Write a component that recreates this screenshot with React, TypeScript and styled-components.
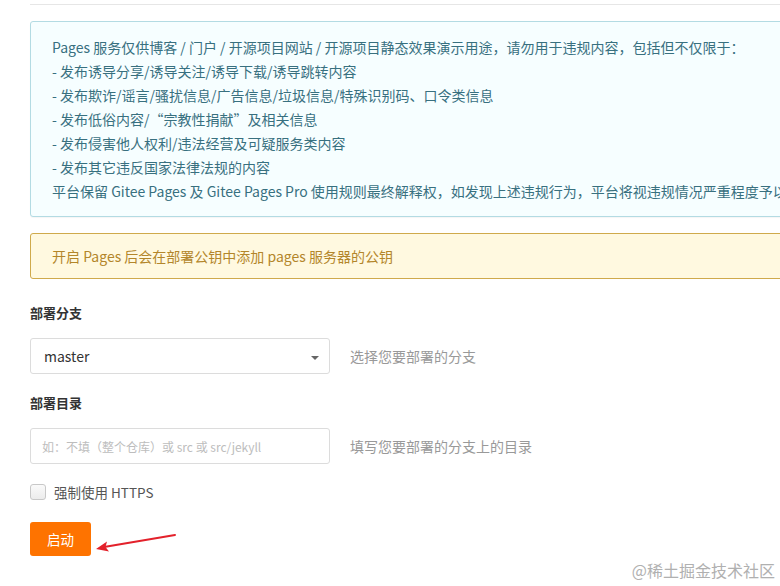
import React from "react";
import styled, { createGlobalStyle, css } from "styled-components";

const GlobalStyle = createGlobalStyle`
  html, body {
    margin: 0;
    padding: 0;
    background: #ffffff;
    overflow: hidden;
  }
  body {
    font-family: "Noto Sans CJK SC", "Noto Sans", sans-serif;
    color: #333;
    -webkit-font-smoothing: antialiased;
  }
  * { box-sizing: border-box; }
`;

const Page = styled.div`
  position: relative;
  width: 780px;
  height: 586px;
  overflow: hidden;
`;

const Content = styled.div`
  width: 1000px;
  padding: 4px 0 0 30px;
  display: flex;
  flex-direction: column;
`;

const TopRule = styled.div`
  height: 1px;
  background: #e6e6e6;
  margin-bottom: 16px;
`;

type AlertKind = "info" | "warning";

const Alert = styled.div<{ $kind: AlertKind }>`
  border-radius: 3px;
  font-size: 14px;
  line-height: 24px;
  ${(p) =>
    p.$kind === "info"
      ? css`
          background: #f6feff;
          border: 1px solid #b3dbe3;
          color: #38707f;
          padding: 13px 20px 13px 21px;
          margin-bottom: 16px;
          box-shadow: 0 1px 1px rgba(0, 0, 0, 0.04);
        `
      : css`
          background: #fff9e0;
          border: 1px solid #cfaa4c;
          color: #b3862a;
          padding: 10px 20px 10px 21px;
          margin-bottom: 24px;
        `}
`;

const AlertLine = styled.div`
  white-space: nowrap;
`;

const FieldLabel = styled.div`
  font-size: 13px;
  font-weight: 700;
  color: #333;
  line-height: 20px;
  margin-bottom: 15px;
`;

const FieldRow = styled.div`
  display: flex;
  align-items: center;
  gap: 20px;
  margin-bottom: 19px;
`;

const SelectBox = styled.div`
  width: 300px;
  height: 36px;
  border: 1px solid #dcdcdc;
  border-radius: 3px;
  background: #fff;
  display: flex;
  align-items: center;
  justify-content: space-between;
  padding: 0 10px 0 13px;
  font-size: 14px;
  color: #333;
`;

const Caret = styled.span`
  width: 0;
  height: 0;
  border-left: 4px solid transparent;
  border-right: 4px solid transparent;
  border-top: 4px solid #666;
  margin-top: 3px;
`;

const TextInput = styled.input`
  width: 300px;
  height: 36px;
  border: 1px solid #dcdcdc;
  border-radius: 3px;
  padding: 0 11px;
  font-family: inherit;
  font-size: 12px;
  color: #333;
  outline: none;
  &::placeholder {
    color: #bdbdbd;
  }
`;

const Help = styled.span`
  font-size: 14px;
  color: #999;
`;

const CheckRow = styled.label`
  display: flex;
  align-items: center;
  gap: 8px;
  font-size: 13.5px;
  color: #555;
  margin: -1px 0 20px;
  height: 20px;
`;

const CheckBox = styled.span`
  width: 16px;
  height: 16px;
  border: 1px solid #c8c8c8;
  border-radius: 3px;
  background: linear-gradient(#fafafa, #ececec);
`;

const ActionRow = styled.div`
  display: flex;
  align-items: center;
`;

const PrimaryButton = styled.button`
  width: 61px;
  height: 34px;
  border: none;
  border-radius: 3px;
  background: #fe7300;
  color: #fff;
  font-family: inherit;
  font-size: 13.5px;
  cursor: pointer;
`;

const ArrowMark = styled.svg`
  position: absolute;
  left: 90px;
  top: 528px;
  width: 90px;
  height: 26px;
  overflow: visible;
`;

const Watermark = styled.div`
  position: absolute;
  right: 5px;
  bottom: 4px;
  font-size: 16px;
  font-weight: 400;
  color: #b0b0b0;
`;

const infoLines = [
  "Pages 服务仅供博客 / 门户 / 开源项目网站 / 开源项目静态效果演示用途，请勿用于违规内容，包括但不仅限于：",
  "- 发布诱导分享/诱导关注/诱导下载/诱导跳转内容",
  "- 发布欺诈/谣言/骚扰信息/广告信息/垃圾信息/特殊识别码、口令类信息",
  "- 发布低俗内容/“宗教性捐献”及相关信息",
  "- 发布侵害他人权利/违法经营及可疑服务类内容",
  "- 发布其它违反国家法律法规的内容",
  "平台保留 Gitee Pages 及 Gitee Pages Pro 使用规则最终解释权，如发现上述违规行为，平台将视违规情况严重程度予以处理",
];

export default function App() {
  return (
    <Page>
      <GlobalStyle />
      <Content>
        <TopRule />
        <Alert $kind="info">
          {infoLines.map((l) => (
            <AlertLine key={l}>{l}</AlertLine>
          ))}
        </Alert>
        <Alert $kind="warning">
          <AlertLine>开启 Pages 后会在部署公钥中添加 pages 服务器的公钥</AlertLine>
        </Alert>

        <FieldLabel>部署分支</FieldLabel>
        <FieldRow>
          <SelectBox>
            <span>master</span>
            <Caret />
          </SelectBox>
          <Help>选择您要部署的分支</Help>
        </FieldRow>

        <FieldLabel>部署目录</FieldLabel>
        <FieldRow>
          <TextInput placeholder="如：不填（整个仓库）或 src 或 src/jekyll" />
          <Help>填写您要部署的分支上的目录</Help>
        </FieldRow>

        <CheckRow>
          <CheckBox />
          <span>强制使用 HTTPS</span>
        </CheckRow>

        <ActionRow>
          <PrimaryButton>启动</PrimaryButton>
        </ActionRow>
      </Content>

      <ArrowMark viewBox="0 0 90 26">
        <path d="M85 7 L14 19" stroke="#e3212b" strokeWidth="2" strokeLinecap="round" />
        <path d="M6 21 L17 13.5 L15.5 19 L19 23.5 Z" fill="#e3212b" />
      </ArrowMark>
      <Watermark>@稀土掘金技术社区</Watermark>
    </Page>
  );
}
